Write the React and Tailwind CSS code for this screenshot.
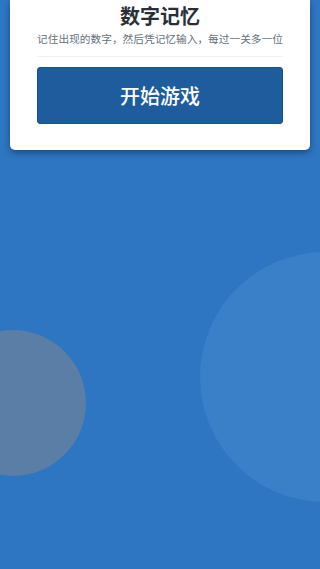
import React from 'react';

const App = () => {
  return (
    <div
      className="relative w-full h-[569px] overflow-hidden bg-[#2e75c2]"
      style={{ fontFamily: '"Noto Sans CJK SC", "Noto Sans", sans-serif' }}
    >
      {/* decorative circles */}
      <div className="absolute left-[-60px] top-[330px] w-[146px] h-[146px] rounded-full bg-[#5a7ea6]" />
      <div className="absolute left-[200px] top-[252px] w-[250px] h-[250px] rounded-full bg-[#3a80c8]" />

      {/* card */}
      <div className="relative mx-[10px] bg-white rounded-b-[5px] shadow-[0_3px_6px_rgba(0,0,0,0.35)] px-[27px] pt-[4px] pb-[26px]">
        <h1 className="text-center text-[20px] leading-[24px] font-bold text-[#2a2f36]">数字记忆</h1>
        <p className="mt-[3px] text-center text-[10.7px] leading-[16px] text-[#66707c] whitespace-nowrap">
          记住出现的数字，然后凭记忆输入，每过一关多一位
        </p>
        <div className="mt-[9px] h-px bg-[#f0f0f0]" />
        <button className="mt-[10px] w-full h-[57px] rounded-[3px] bg-[#1f5c9e] border border-[#1a5290] text-white text-[20px] font-medium flex items-center justify-center">
          开始游戏
        </button>
      </div>
    </div>
  );
};

export default App;
